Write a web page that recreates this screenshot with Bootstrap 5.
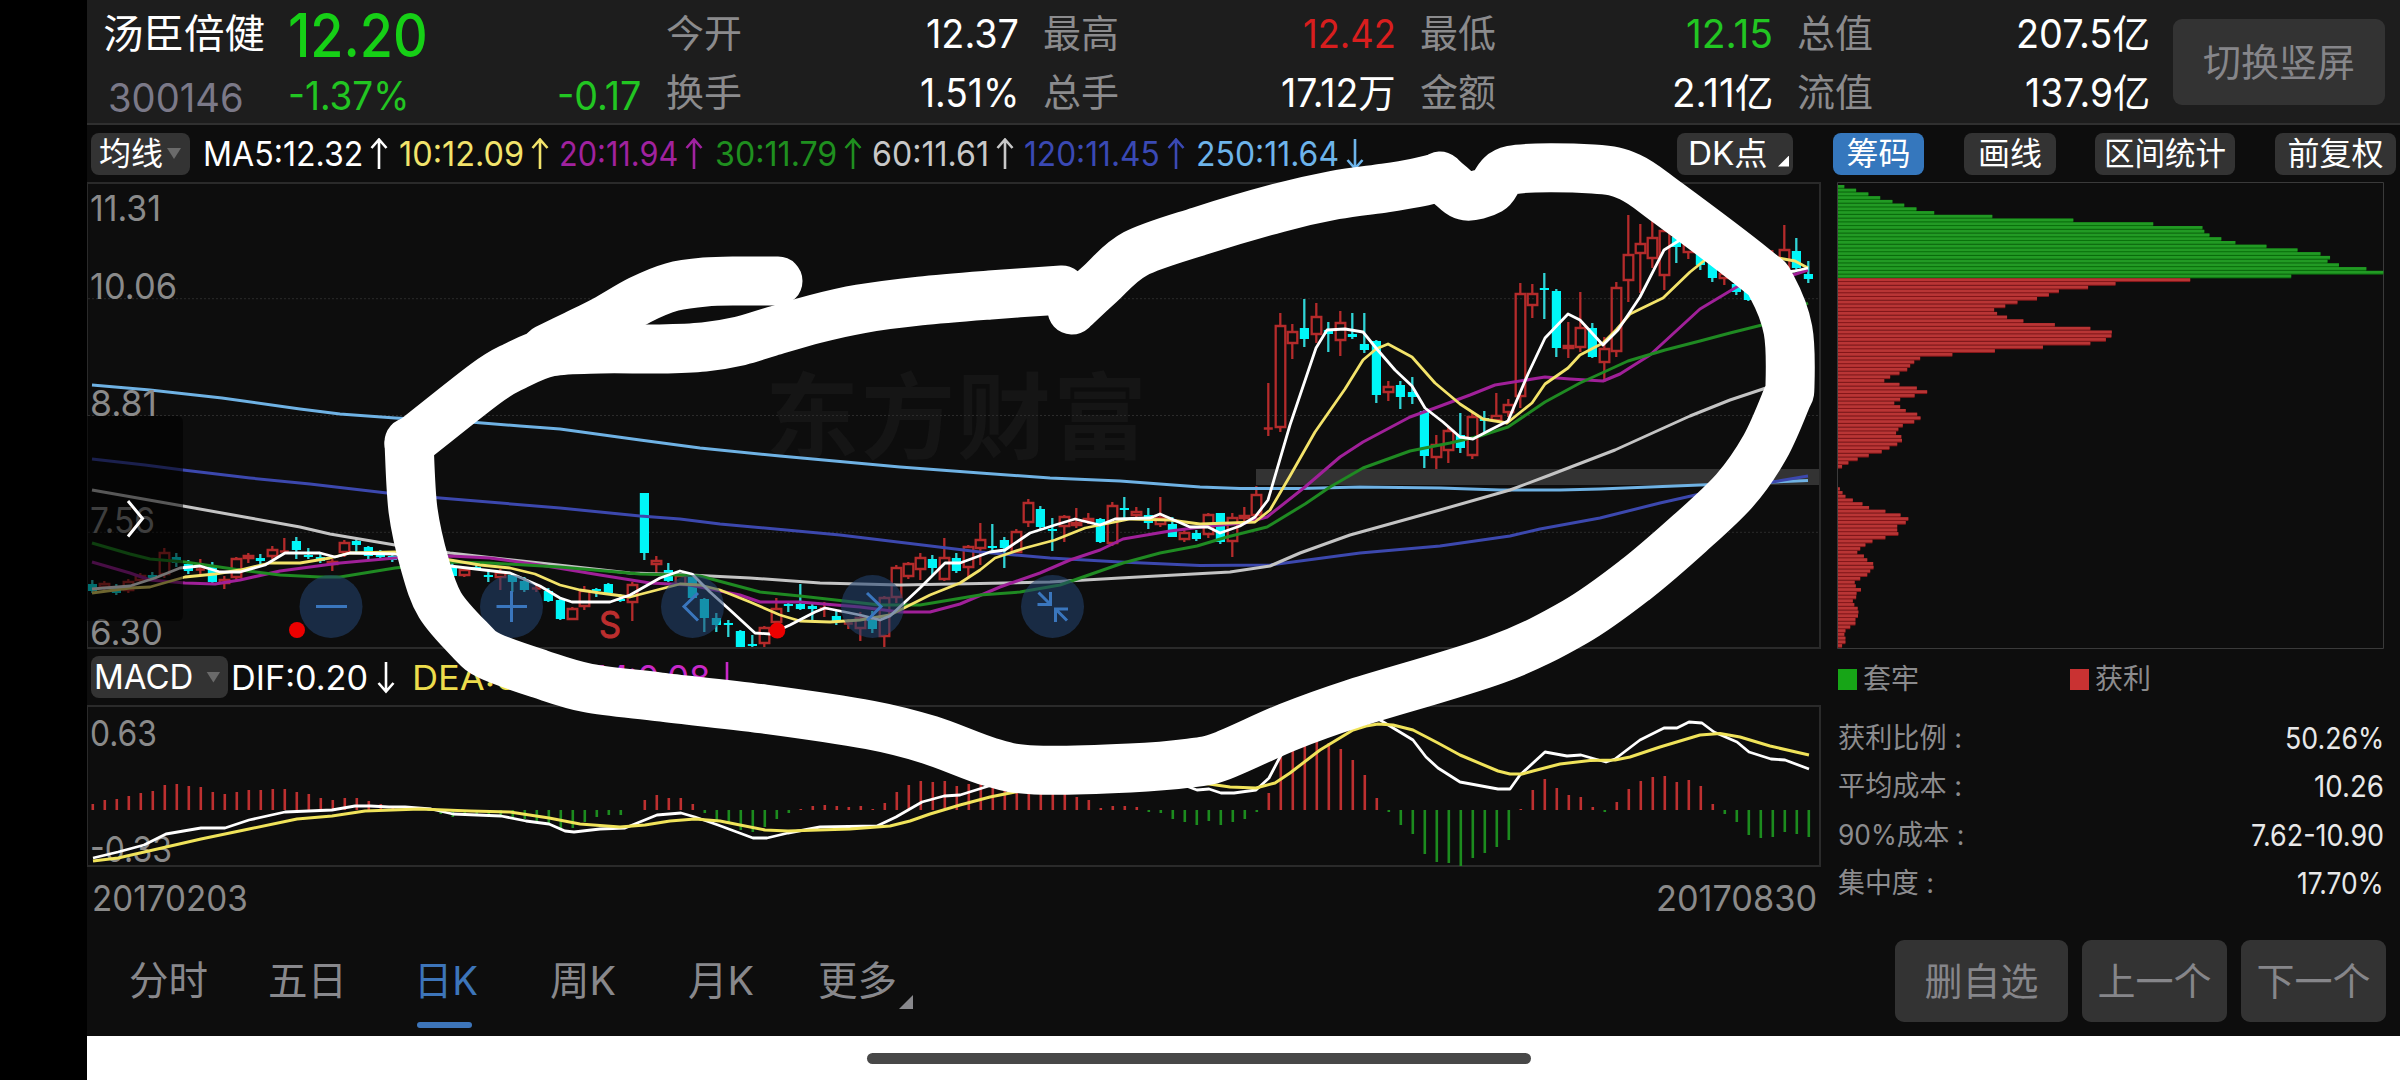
<!DOCTYPE html>
<html lang="zh-CN">
<head>
<meta charset="utf-8">
<meta name="viewport" content="width=device-width, initial-scale=1">
<title>汤臣倍健 300146</title>
<link href="https://cdn.jsdelivr.net/npm/bootstrap@5.3.0/dist/css/bootstrap.min.css" rel="stylesheet">
<style>
body{background:#000;font-family:Inter,"Noto Sans CJK SC",sans-serif;color:#fff;overflow:hidden}
.screen{width:2400px;height:1080px;padding-left:87px}
.app{height:1036px;background:#0d0d0d}
.fit{display:inline-block;white-space:nowrap;transform-origin:0 50%}
.t-up{color:#d81e1e}.t-down{color:#22c622}.t-mute{color:#8b8b8d}
.quote{height:125px;background:#1d1d1d;border-bottom:2px solid #303030;padding:4px 15px 0 16px}
.line-a,.line-b{height:59px;line-height:59px;font-size:39px}
.name-col{width:185px}
.stock-name{font-size:40px;height:62px}
.code{color:#7b7988;padding-left:5px;line-height:64px}
.price-col{width:353px}
.last{font-size:60px;font-weight:500;color:#16d016;line-height:62px;height:62px}
.metrics{gap:24px;margin-left:25px}
.metric{width:353px}
.metric .line-a span:first-child,.metric .line-b span:first-child{font-size:38px}
.keybtn,.keybtn:hover{background:#333;color:#86868a;border:0;border-radius:9px;padding:0;line-height:1}
.flip{width:212px;height:86px;font-size:38px;margin:15px 0 0 auto}
.tools{height:57px;padding:0 4px 0 4px;font-size:33.5px}
.chip,.chip:hover{background:#333;color:#fff;border:0;border-radius:8px;height:42px;padding:0;font-size:32px;line-height:42px;white-space:nowrap}
.chip.on{background:#3577bd}
.averages{display:grid;grid-template-columns:196px 160px 156px 157px 152px 172px 170px;margin-left:13px;line-height:42px}
.averages .arrow{margin-left:7px}
.arrow{width:18px;height:32px;fill:none;stroke:currentColor;stroke-width:2.6}
.corner{width:11px;height:11px;background:currentColor;clip-path:polygon(100% 0,100% 100%,0 100%)}
.caret{width:14px;height:11px;background:#6a6a6a;clip-path:polygon(0 0,100% 0,50% 100%)}
.charts{width:1735px}
.charts svg,.chips svg{display:block;overflow:visible}
.macd-head{height:56px;font-size:34px;line-height:56px;padding-left:4px}
.macd-head>.fit{padding-top:2px}
.dates{height:65px;font-size:36px;line-height:61px;color:#8a8a8a;padding:0 5px 0 5px}
.chips{margin-left:15px;width:548px;font-size:28px}
.legend-row{height:65px;line-height:58px;padding-bottom:5px}
.sw{width:19px;height:21px;margin-right:6px}
.stat{height:48.4px;line-height:48px;padding:0 1px 0 1px}
.stat .num{font-size:30px;color:#e8e8e8}
.periods{height:103px;font-size:39.5px;color:#88888c;padding-right:14px}
.periods .nav-link{color:inherit;padding:0;height:103px;line-height:96px;white-space:nowrap;position:relative}
.periods .nav-link.active{color:#3d75ba}
.periods .nav-link.active::after{content:"";position:absolute;left:1px;top:89px;width:55px;height:6px;border-radius:3px;background:#3d75ba}
.foot{height:82px;margin-top:7px;font-size:38px}
.homebar{height:44px;background:#fff}
.handle{width:664px;height:11px;border-radius:6px;background:#484848;margin:17px 0 0 780px}
.over{left:0;top:0;pointer-events:none}
.axis{font-size:36px;fill:#8a8a8a}
</style>
<script src="https://cdn.jsdelivr.net/npm/bootstrap@5.3.0/dist/js/bootstrap.bundle.min.js"></script>
</head>
<body>
<div class="screen position-relative">
<div class="app d-flex flex-column">
  <header class="quote d-flex">
    <div class="name-col">
      <div class="line-a stock-name"><span class="fit" data-w="162">汤臣倍健</span></div>
      <div class="line-b code"><span class="fit" data-w="136">300146</span></div>
    </div>
    <div class="price-col">
      <div class="line-a last"><span class="fit" data-w="140">12.20</span></div>
      <div class="line-b t-down d-flex justify-content-between"><span class="fit" data-w="121">-1.37%</span><span class="fit" data-w="84">-0.17</span></div>
    </div>
    <div class="metrics d-flex">
      <div class="metric">
        <div class="line-a d-flex justify-content-between"><span class="t-mute">今开</span><span class="fit" data-w="93">12.37</span></div>
        <div class="line-b d-flex justify-content-between"><span class="t-mute">换手</span><span class="fit" data-w="99">1.51%</span></div>
      </div>
      <div class="metric">
        <div class="line-a d-flex justify-content-between"><span class="t-mute">最高</span><span class="fit t-up" data-w="93">12.42</span></div>
        <div class="line-b d-flex justify-content-between"><span class="t-mute">总手</span><span class="fit" data-w="115">17.12万</span></div>
      </div>
      <div class="metric">
        <div class="line-a d-flex justify-content-between"><span class="t-mute">最低</span><span class="fit t-down" data-w="87">12.15</span></div>
        <div class="line-b d-flex justify-content-between"><span class="t-mute">金额</span><span class="fit" data-w="101">2.11亿</span></div>
      </div>
      <div class="metric">
        <div class="line-a d-flex justify-content-between"><span class="t-mute">总值</span><span class="fit" data-w="134">207.5亿</span></div>
        <div class="line-b d-flex justify-content-between"><span class="t-mute">流值</span><span class="fit" data-w="125">137.9亿</span></div>
      </div>
    </div>
    <button class="btn keybtn flip">切换竖屏</button>
  </header>

  <div class="tools d-flex align-items-center">
    <button class="btn chip d-flex align-items-center" style="width:99px"><span class="ms-2 me-1">均线</span><span class="caret"></span></button>
    <div class="averages" id="averages"></div>
    <div class="d-flex ms-auto">
      <button class="btn chip d-flex" style="width:116px;margin-right:40px"><span class="fit" data-w="80" style="margin-left:11px">DK点</span><span class="corner align-self-end ms-auto me-1 mb-2"></span></button>
      <button class="btn chip on" style="width:91px;margin-right:40px">筹码</button>
      <button class="btn chip" style="width:92px;margin-right:39px">画线</button>
      <button class="btn chip" style="width:140px;margin-right:40px"><span class="fit" data-w="122">区间统计</span></button>
      <button class="btn chip" style="width:121px">前复权</button>
    </div>
  </div>

  <main class="d-flex">
    <section class="charts">
      <svg id="price" width="1735" height="467" viewBox="87 182 1735 467"></svg>
      <div class="macd-head d-flex align-items-center">
        <button class="btn chip d-flex align-items-center" style="width:137px"><span class="fit" data-w="99" style="margin-left:3px;font-size:34px">MACD</span><span class="caret" style="margin-left:13px"></span></button>
        <span class="fit" data-w="137" style="margin-left:3px">DIF:0.20</span>
        <svg class="arrow" style="margin-left:9px" viewBox="0 0 18 32"><path d="M9 1V30M1.500 22L9 30.500L16.500 22"/></svg>
        <span class="fit" data-w="150" style="margin-left:17px;color:#ecdc4c">DEA:0.16</span>
        <span class="fit" data-w="115" style="margin-left:34px;color:#c828c8">M:0.08</span>
        <svg class="arrow" style="margin-left:8px;color:#c828c8" viewBox="0 0 18 32"><path d="M9 1V30M1.500 22L9 30.500L16.500 22"/></svg>
      </div>
      <svg id="macd" width="1735" height="163" viewBox="87 705 1735 163"></svg>
      <div class="dates d-flex justify-content-between"><span class="fit" data-w="156">20170203</span><span class="fit" data-w="161">20170830</span></div>
    </section>
    <aside class="chips">
      <svg id="dist" width="548" height="467" viewBox="1837 182 548 467"></svg>
      <div class="legend-row d-flex t-mute">
        <div class="d-flex align-items-center" style="width:232px"><span class="sw" style="background:#17a517;margin-left:1px"></span>套牢</div>
        <div class="d-flex align-items-center"><span class="sw" style="background:#c93232;margin-left:1px"></span>获利</div>
      </div>
      <div class="stat d-flex justify-content-between"><span class="t-mute fit" data-w="124">获利比例 :</span><span class="num fit" data-w="99">50.26%</span></div>
      <div class="stat d-flex justify-content-between"><span class="t-mute fit" data-w="124">平均成本 :</span><span class="num fit" data-w="70">10.26</span></div>
      <div class="stat d-flex justify-content-between"><span class="t-mute fit" data-w="126">90%成本 :</span><span class="num fit" data-w="133">7.62-10.90</span></div>
      <div class="stat d-flex justify-content-between"><span class="t-mute fit" data-w="96">集中度 :</span><span class="num fit" data-w="87">17.70%</span></div>
    </aside>
  </main>

  <footer class="periods d-flex">
    <nav class="nav" style="padding-left:42px">
      <a class="nav-link" style="width:139px">分时</a>
      <a class="nav-link" style="width:148px">五日</a>
      <a class="nav-link active" style="width:134px"><span class="fit" data-w="64" style="margin-left:-2px">日K</span></a>
      <a class="nav-link" style="width:138px"><span class="fit" data-w="66">周K</span></a>
      <a class="nav-link" style="width:130px"><span class="fit" data-w="66">月K</span></a>
      <a class="nav-link d-flex">更多<span class="corner" style="width:14px;height:14px;margin:62px 0 0 2px"></span></a>
    </nav>
    <div class="d-flex ms-auto" style="gap:14px">
      <button class="btn keybtn foot" style="width:173px">删自选</button>
      <button class="btn keybtn foot" style="width:145px">上一个</button>
      <button class="btn keybtn foot" style="width:145px">下一个</button>
    </div>
  </footer>
</div>
<div class="homebar d-flex"><div class="handle"></div></div>
<svg class="over position-absolute" id="ink" width="2400" height="1080" viewBox="0 0 2400 1080"></svg>
</div>
<script>
const $ = id => document.getElementById(id);
// moving averages
const mas = [['MA5:12.32','#fff',160,1],['10:12.09','#f2e36b',125,1],['20:11.94','#a0229f',119,1],['30:11.79','#1f8f1f',122,1],['60:11.61','#c8c8c8',117,1],['120:11.45','#3a49b4',136,1],['250:11.64','#6db4ea',143,0]];
$('averages').innerHTML = mas.map(([t,c,w,up]) => `<span class="d-flex align-items-center" style="color:${c}"><span class="fit" data-w="${w}">${t}</span><svg class="arrow" viewBox="0 0 18 32"><path d="${up ? 'M9 31V2M1.500 10L9 1.500L16.500 10' : 'M9 1V30M1.500 22L9 30.500L16.500 22'}"/></svg></span>`).join('');

const X = i => 92.3 + 12 * i;
// each entry: kind (r rise, c fall), high, body top, body bottom, low
const k = `c580,584,591,593 r581,583,588,590 c584,586,593,595 r579,581,591,593 r573,575,581,583 c572,575,578,580 r548,552,575,578 c553,557,563,567 c560,564,571,574 r559,569,571,575 c562,566,582,583 r576,579,584,589 r557,558,578,580 r553,555,559,563 c554,558,561,564 r546,549,557,559 r538,551,552,553 c537,541,550,559 c548,555,557,559 c552,557,561,563 r559,561,565,571 r540,542,553,557 c539,541,545,552 c546,547,556,560 c550,555,557,559 c555,556,560,562 c556,558,562,564 r556,558,564,566 c558,561,567,569 c559,563,570,573 c560,567,576,579 r568,569,576,577 c563,567,569,570 c569,575,577,582 r569,572,578,590 c573,575,582,592 c577,581,590,592 r585,588,590,592 c588,591,601,602 c597,600,619,620 r607,608,620,620 r586,590,607,610 c588,589,590,597 c583,584,593,595 c594,599,601,602 r582,584,603,621 c493,493,553,560 r556,560,565,573 c563,570,581,582 r573,575,585,586 c573,576,598,598 c598,599,618,632 c613,618,625,632 c620,623,625,637 c630,631,647,648 c635,644,646,649 r626,627,644,648 r598,608,623,633 c602,604,606,612 c584,604,609,610 c604,606,609,620 r602,608,610,617 c611,616,622,625 r619,623,625,629 r612,617,629,641 c611,620,629,633 r596,597,637,648 r565,567,598,603 r562,563,577,579 r553,557,570,580 c555,559,568,575 r538,557,580,581 c553,558,571,573 r545,546,568,577 r523,539,549,565 c524,546,547,552 c537,540,548,568 r529,531,553,553 r499,502,523,527 c506,509,527,529 c518,529,530,551 r515,516,527,542 r508,522,526,528 r513,518,522,524 c518,519,542,543 r502,505,544,546 c497,508,510,518 r507,511,516,519 c508,515,523,529 r497,517,525,527 c517,524,537,537 r530,532,540,542 c530,533,539,541 r513,514,535,538 c513,513,542,544 r513,517,542,557 r507,515,519,522 r486,494,516,520 r383,428,429,436 r313,325,428,432 r324,331,344,359 c299,328,339,347 r303,316,335,343 c322,330,334,352 r311,322,341,356 c313,334,337,339 c313,344,350,353 c340,341,395,403 r381,386,393,401 c381,385,397,409 c377,392,397,404 c410,411,456,468 r435,444,458,469 r427,430,451,463 c413,435,448,453 r413,416,456,459 c411,418,421,432 r393,415,421,422 r399,404,413,417 r283,293,397,408 r284,293,306,318 c273,288,290,319 c289,291,348,357 r322,345,349,358 r292,327,348,352 c323,328,357,358 r337,348,363,382 r282,287,352,357 r215,254,281,302 r224,243,254,293 r218,237,259,268 r223,230,276,290 c230,237,247,263 r237,240,253,259 c250,252,265,270 c257,260,278,282 r270,273,279,285 c280,284,292,295 c288,291,300,301 r262,268,282,290 r250,258,272,278 r225,249,270,275 c238,251,268,270 c261,274,279,283`.split(' ');
const candles = k.map((s, i) => {
  const [h, a, b, l] = s.slice(1).split(',').map(Number), x = X(i);
  if (s[0] === 'c') return `<path d="M${x} ${h}V${l}" stroke="#30d4d6" stroke-width="2.300"/><rect x="${x-4.500}" y="${a}" width="9.200" height="${Math.max(b-a,2)}" fill="#00f6f8"/>`;
  return b - a < 3 ? `<path d="M${x-4.500} ${a+.5}h9M${x} ${h}V${l}" stroke="#b42b2b" stroke-width="2.300"/>`
    : `<path d="M${x} ${h}V${a}M${x} ${b}V${l}M${x-4.600} ${a+1}h9.600V${b-1}h-9.600Z" fill="none" stroke="#b42b2b" stroke-width="2.300"/>`;
}).join('');
const lines = [
 ['#6fb2e4',3,'92,385 150,390 222,398 300,409 340,414 395,418 470,422 520,426 560,429 640,440 700,448 780,456 900,467 980,473 1050,478 1120,481 1200,487 1240,488.500 1300,488.500 1360,487 1440,488 1500,490 1560,490 1600,489 1650,487 1700,485 1808,480.500'],
 ['#3c48ae',3,'92,459 145,465 183,470 250,478 310,484 387,493 440,498 560,508 640,516 680,519 720,524 840,535 980,552 1050,558 1120,562 1200,565.500 1270,565 1360,553 1440,546 1510,536 1540,529 1600,518 1660,503 1700,494 1808,476'],
 ['#c4c4c4',3,'92,490 183,506 250,518 300,527 330,534 395,545 450,553 540,563 630,573 680,574.500 750,578 820,583 900,585 980,583.500 1050,582 1120,578 1230,572 1270,566 1300,553 1350,535 1440,510 1510,490 1550,475 1615,450 1690,416 1730,400 1766,388 1808,378'],
 ['#a02099',3,'92,562 130,573 150,580 185,583 215,584 240,580 280,571 340,563 395,558 450,556 490,558 540,565 600,575 650,583 690,585 740,595 760,602 800,602 860,607 900,612 930,612 960,604 1000,587 1040,573 1070,560 1100,550 1123,539 1170,531 1210,526 1245,523 1267,517 1305,487 1340,457 1363,442 1410,417 1435,408 1470,395 1495,385 1545,377 1570,379 1603,381 1620,374 1650,355 1700,309 1740,285 1790,276 1808,270'],
 ['#1f8a22',3,'92,543 130,554 150,559 185,562 240,570 280,575 320,577 340,577 395,568 450,562 490,563 560,567 640,574 680,575 700,576 760,592 800,596 880,605 920,605 980,595 1020,592 1060,585 1123,563 1160,553 1197,546 1227,537 1267,527 1305,504 1330,487 1363,468 1410,451 1450,443 1480,436 1508,427 1545,402 1580,383 1628,361 1665,350 1700,341 1730,333 1766,324 1800,307 1808,303'],
 ['#f3e36a',2.800,'92,593 130,588 150,587 185,577 215,574 240,570 270,563 300,563 330,558 350,553 395,552 450,560 480,565 510,568 535,574 560,585 580,590 600,593 630,597 680,584 700,585 720,590 750,602 780,615 800,621 830,622 860,620 890,615 930,595 960,583 980,570 995,558 1025,548 1055,540 1085,528 1130,519 1170,520 1200,524 1230,523 1255,522 1270,510 1290,476 1315,432 1345,389 1363,360 1376,349 1388,344 1412,357 1435,383 1460,404 1483,419 1507,423 1532,403 1545,384 1568,368 1580,355 1603,343 1617,329 1630,314 1663,298 1690,272 1705,260 1740,248 1778,258 1795,261 1808,268'],
 ['#fff',2.800,'92,589 130,586 155,578 180,568 200,566 220,572 240,572 265,565 285,553 320,553 335,557 350,553 395,554 450,566 510,573 540,586 560,598 572,602 610,602 630,595 660,578 680,571 692,574 710,592 730,610 755,633 770,634 790,625 815,612 825,608 860,615 880,620 890,616 920,588 945,563 960,563 990,552 1005,550 1030,533 1055,525 1075,519 1100,525 1115,519 1150,518 1160,514 1190,527 1208,527 1220,533 1240,526 1255,517 1268,500 1290,425 1316,348 1327,330 1345,329 1363,332 1376,348 1395,370 1412,386 1425,408 1443,422 1460,437 1473,439 1490,430 1508,421 1528,374 1545,338 1568,314 1580,320 1603,345 1618,330 1640,297 1664,250 1680,240 1720,236 1750,262 1780,273 1795,271 1808,268']
];
const poly = ([c,w,p]) => `<polyline points="${p}" fill="none" stroke="${c}" stroke-width="${w}" stroke-linejoin="round"/>`;
const label = (t,x,y,w) => `<text class="axis" x="${x}" y="${y}" textLength="${w}" lengthAdjust="spacingAndGlyphs">${t}</text>`;
const knob = (x,d) => `<circle cx="${x}" cy="606.500" r="31.500" fill="#23436e" opacity=".57"/><path d="${d}" fill="none" stroke="#3a76bd" stroke-width="3"/>`;
$('price').innerHTML =
  `<text x="765" y="452" font-size="94" font-weight="700" fill="#151515" textLength="382">东方财富</text>
  <path d="M88 298.700H1820M88 415.500H1820M88 532.300H1820" stroke="#2b2b2b" stroke-width="1" stroke-dasharray="2 2"/>
  <rect x="1256" y="469" width="564" height="16" fill="#333"/>` + candles + lines.map(poly).join('') +
  `<path d="M87 183H1820V648H87" fill="none" stroke="#2a2a2a" stroke-width="2"/><path d="M87.500 182V648" stroke="#2a2a2a"/>` +
  label('11.31',90,221,71)+label('10.06',90,299,87)+label('8.81',90,415.500,67)+label('7.56',90,532.500,65)+label('6.30',90,645,73)+
  `<path d="M87 416H177q6 0 6 6V615q0 6-6 6H87Z" fill="#000" opacity=".55"/>
  <path d="M128 501L142.500 518.500L128 536.500" fill="none" stroke="#fff" stroke-width="3"/>`+
  knob(331,'M316 606.500H347')+knob(511.500,'M496.500 606.500H527M511.500 591V622')+
  knob(692.500,'M698 593L684 606.500L698 620.500')+knob(872.500,'M867 593L881 606.500L867 620.500')+
  knob(1052.500,'M1038.500 592.500L1050 604M1050.500 592V604.500H1037.500M1067 620.500L1055.500 609M1068 609H1055.500V622')+
  `<circle cx="297" cy="630" r="8" fill="#ec0000"/><circle cx="777.300" cy="630.500" r="8" fill="#ec0000"/><text x="599" y="638" font-size="37" fill="#bb2e2e" stroke="#bb2e2e" textLength="22" lengthAdjust="spacingAndGlyphs">S</text>`;

// MACD histogram
const hist = [6,10,11,14,17,19,25,26,24,23,18,16,18,20,20,21,21,18,16,12,10,12,12,9,6,4,3,2,-1,-4,-7,-5,-4,-7,-7,-8,-9,-11,-14,-18,-18,-12,-7,-5,-5,0,10,15,12,12,6,-3,-10,-14,-20,-22,-17,-9,-3,1,4,5,4,3,4,1,7,18,25,29,28,29,24,26,27,24,21,20,18,18,18,16,13,10,2,4,4,3,-2,-3,-9,-12,-15,-11,-15,-12,-9,-2,17,53,65,67,69,67,61,50,35,12,-2,-15,-24,-44,-52,-53,-56,-48,-43,-37,-30,1,20,31,22,15,13,3,-2,8,21,29,33,34,28,30,24,6,-4,-12,-25,-28,-27,-22,-24,-27];
$('macd').innerHTML = `<path d="M87 706H1820V866H87" fill="none" stroke="#2a2a2a" stroke-width="2"/><path d="M87.500 706V866" stroke="#2a2a2a"/>` +
  hist.map((v,i)=>`<path d="M${X(i)+.5} 810v${-v}" stroke="${v>0?'#be3030':'#1c8c1e'}" stroke-width="2.600"/>`).join('') +
  label('0.63',90,746,67)+label('-0.33',90,862,82)+
  poly(['#fff',2.800,'93,858 118,852 144,845 166,834 201,828 225,828 249,820 285,812 332,810 355,806 370,806 389,807 405,807 431,809 453,814 501,816 526,821 549,824 565,831 574,832 600,829 625,828 657,815 681,813 695,817 718,825 753,838 767,838 788,833 820,827 877,826 896,817 922,802 944,796 960,795 992,785 1070,770 1150,775 1189,787 1197,790 1209,789 1221,793 1234,793 1256,790 1269,778 1280,757 1300,730 1340,712 1370,714 1380,720 1413,740 1426,757 1438,768 1460,782 1498,789 1510,789 1520,775 1545,752 1567,756 1581,755 1595,759 1606,762 1615,759 1640,740 1664,728 1677,728 1689,722 1702,723 1714,732 1737,742 1749,752 1771,759 1785,760 1809,769'])+
  poly(['#f0e35a',3,'93,861 118,858 140,853 201,839 249,829 297,819 332,816 365,811 420,809 470,811 510,812 549,818 580,824 620,827 645,825 670,821 695,819 720,821 740,825 765,830 788,831 850,829 890,826 910,821 930,814 960,805 990,797 1020,791 1100,775 1209,784 1230,787 1256,788 1275,783 1290,773 1320,750 1353,730 1366,726 1378,724 1393,725 1413,730 1438,743 1460,755 1498,771 1510,774 1522,774 1533,771 1560,764 1590,760.500 1615,760 1630,757 1660,747 1700,735 1720,733.500 1740,737 1770,746 1809,755']);

// cost distribution, bar ends measured on a 2.703x scale from 48
const dist = [65,97,130,162,195,227,260,308,465,684,900,1033,1038,1052,1084,1122,1206,1290,1352,1378,1371,1402,1476,1522,1273,1000,798,724,645,618,586,533,500,470,478,505,549,634,730,788,787,772,730,602,472,357,270,254,243,235,214,189,173,214,261,289,255,216,200,216,231,262,271,254,223,211,205,219,221,208,187,166,131,101,76,59,0,0,0,0,0,53,60,68,88,114,132,176,217,238,231,208,208,211,176,141,122,108,100,118,127,143,144,135,127,108,93,96,110,98,97,88,92,101,103,102,95,95,81,68,65,68,68,59];
$('dist').innerHTML = `<path d="M1837.500 182.500H2383.500V648.500H1837.500Z" fill="none" stroke="#3a3a3a"/>` + dist.map((v,i)=>{
  if(!v) return '';
  const w=(v-48)/2.703, y=(185+3.733*i).toFixed(2), g=i<25;
  return `<rect x="1838" y="${y}" width="${w}" height="3.75" fill="${g?'#0a700c':'#84171a'}"/><rect x="1838" y="${y}" width="${w}" height="2.700" fill="${g?'#229a24':'#b93535'}"/>`;
}).join('');

// freehand marker strokes over the chart
const smooth = s => {
  const p = s.split(' ').map(q=>q.split(',').map(Number)), t=.16;
  let d=`M${p[0]}`;
  for(let i=0;i<p.length-1;i++){const a=p[i-1]||p[i],b=p[i],c=p[i+1],e=p[i+2]||c;
    d+=`C${b[0]+(c[0]-a[0])*t} ${b[1]+(c[1]-a[1])*t} ${c[0]-(e[0]-b[0])*t} ${c[1]-(e[1]-b[1])*t} ${c}`;}
  return `<path d="${d}"/>`;
};
$('ink').innerHTML = `<g fill="none" stroke="#fff" stroke-width="49" stroke-linecap="round" stroke-linejoin="round">`+
 smooth('546,349 575,335 605,320 640,300 672,287 705,282 740,281 778,281')+
 smooth('1072,310 1100,284 1135,254 1200,231 1278,208 1335,195 1385,188 1415,183 1440,177')+
 smooth('1440,176 1450,185 1466,196 1490,190 1512,170 1593,169 1630,177 1668,203 1755,269 1772,287 1788,330 1790,385 1786,400 1765,447 1735,490 1690,533 1635,580 1575,622 1495,660 1352,704 1288,727 1222,756 1190,763 1130,768 1035,770 990,762 930,740 870,725 764,709 660,697 588,688 540,674 490,656 470,640 440,605 425,565 413,510 409,442')+
 smooth('409,444 485,384 515,366 550,352 600,349 660,349 704,347 740,341 770,332 815,319 860,309 920,301 990,295 1062,290')+`</g>`;

document.querySelectorAll('.fit').forEach(el => {
  const n = el.offsetWidth, w = +el.dataset.w;
  el.style.transform = `scaleX(${w/n})`;
  el.style.marginRight = `${w-n}px`;
});
</script>
</body>
</html>
